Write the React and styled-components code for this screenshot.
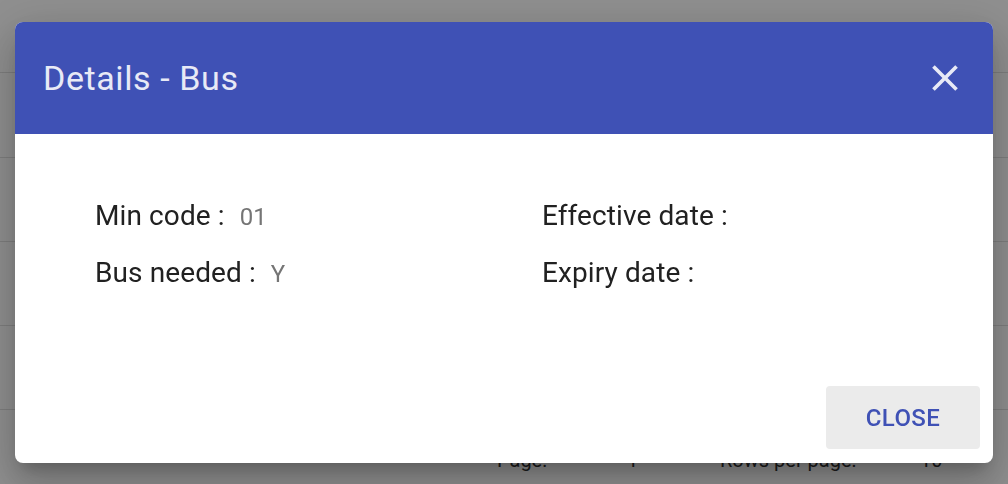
import React from 'react'
import styled, { createGlobalStyle } from 'styled-components'

const GlobalStyle = createGlobalStyle`
    html, body {
        margin: 0;
        padding: 0;
        background: #fff;
        font-family: Roboto, "Liberation Sans", sans-serif;
        overflow: hidden;
    }
`

const Page = styled.div`
    width: 1008px;
    height: 484px;
    display: flex;
    flex-direction: column;
`

const TableRow = styled.div`
    height: ${p => p.h}px;
    border-bottom: 1px solid #e0e0e0;
    flex-shrink: 0;
`

const Pager = styled.div`
    display: flex;
    padding: 39px 0 0 497px;
    font-size: 20px;
    line-height: 23px;
    color: #333;
`

const PagerItem = styled.span`
    width: ${p => p.w}px;
    flex-shrink: 0;
`

const Overlay = styled.div`
    position: fixed;
    inset: 0;
    background: rgba(0, 0, 0, 0.44);
`

const Dialog = styled.div`
    position: absolute;
    left: 15px;
    top: 22px;
    width: 978px;
    height: 441px;
    background: #fff;
    border-radius: 8px;
    overflow: hidden;
    display: flex;
    flex-direction: column;
    box-shadow: 0 11px 15px -7px rgba(0,0,0,0.2), 0 24px 38px 3px rgba(0,0,0,0.14), 0 9px 46px 8px rgba(0,0,0,0.12);
`

const Header = styled.div`
    height: 112px;
    background: #3f51b5;
    color: #e8eaf6;
    display: flex;
    align-items: center;
    justify-content: space-between;
    padding: 0 26px 0 28px;
    flex-shrink: 0;
`

const Title = styled.h2`
    margin: 0;
    font-size: 34px;
    font-weight: 400;
    letter-spacing: 0.6px;
`

const CloseIcon = styled.button`
    background: none;
    border: none;
    padding: 0;
    width: 44px;
    height: 44px;
    color: #e8eaf6;
    display: flex;
    cursor: pointer;
`

const Body = styled.div`
    flex: 1;
    display: grid;
    grid-template-columns: 447px 1fr;
    grid-auto-rows: 57px;
    align-content: start;
    padding: 65px 0 0 80px;
`

const Field = styled.div`
    display: flex;
    align-items: baseline;
    font-size: 28px;
    line-height: 33px;
    letter-spacing: 0.1px;
    color: #212121;
`

const Value = styled.span`
    margin-left: 15px;
    font-size: 24px;
    color: #757575;
`

const Actions = styled.div`
    display: flex;
    justify-content: flex-end;
    padding: 0 13px 14px 0;
`

const CloseButton = styled.button`
    width: 154px;
    height: 63px;
    border: none;
    border-radius: 4px;
    background: #ebebeb;
    color: #3f51b5;
    font-family: inherit;
    font-size: 24px;
    font-weight: 500;
    letter-spacing: 0.4px;
    cursor: pointer;
`

const fields = [
    { label: 'Min code :', value: '01' },
    { label: 'Effective date :', value: '' },
    { label: 'Bus needed :', value: 'Y' },
    { label: 'Expiry date :', value: '' },
]

const App = () => <>
    <GlobalStyle />
    <Page>
        <TableRow h={72} />
        <TableRow h={84} />
        <TableRow h={83} />
        <TableRow h={83} />
        <TableRow h={83} />
        <Pager>
            <PagerItem w={130}>Page:</PagerItem>
            <PagerItem w={93}>1</PagerItem>
            <PagerItem w={200}>Rows per page:</PagerItem>
            <PagerItem w={30}>10</PagerItem>
        </Pager>
    </Page>
    <Overlay>
        <Dialog>
            <Header>
                <Title>Details - Bus</Title>
                <CloseIcon aria-label="close">
                    <svg viewBox="0 0 24 24" width="44" height="44" fill="currentColor">
                        <path d="M19 6.41 17.59 5 12 10.59 6.41 5 5 6.41 10.59 12 5 17.59 6.41 19 12 13.41 17.59 19 19 17.59 13.41 12z" />
                    </svg>
                </CloseIcon>
            </Header>
            <Body>
                {fields.map(f => <Field key={f.label}>
                    {f.label}
                    {f.value && <Value>{f.value}</Value>}
                </Field>)}
            </Body>
            <Actions>
                <CloseButton>CLOSE</CloseButton>
            </Actions>
        </Dialog>
    </Overlay>
</>

export default App
